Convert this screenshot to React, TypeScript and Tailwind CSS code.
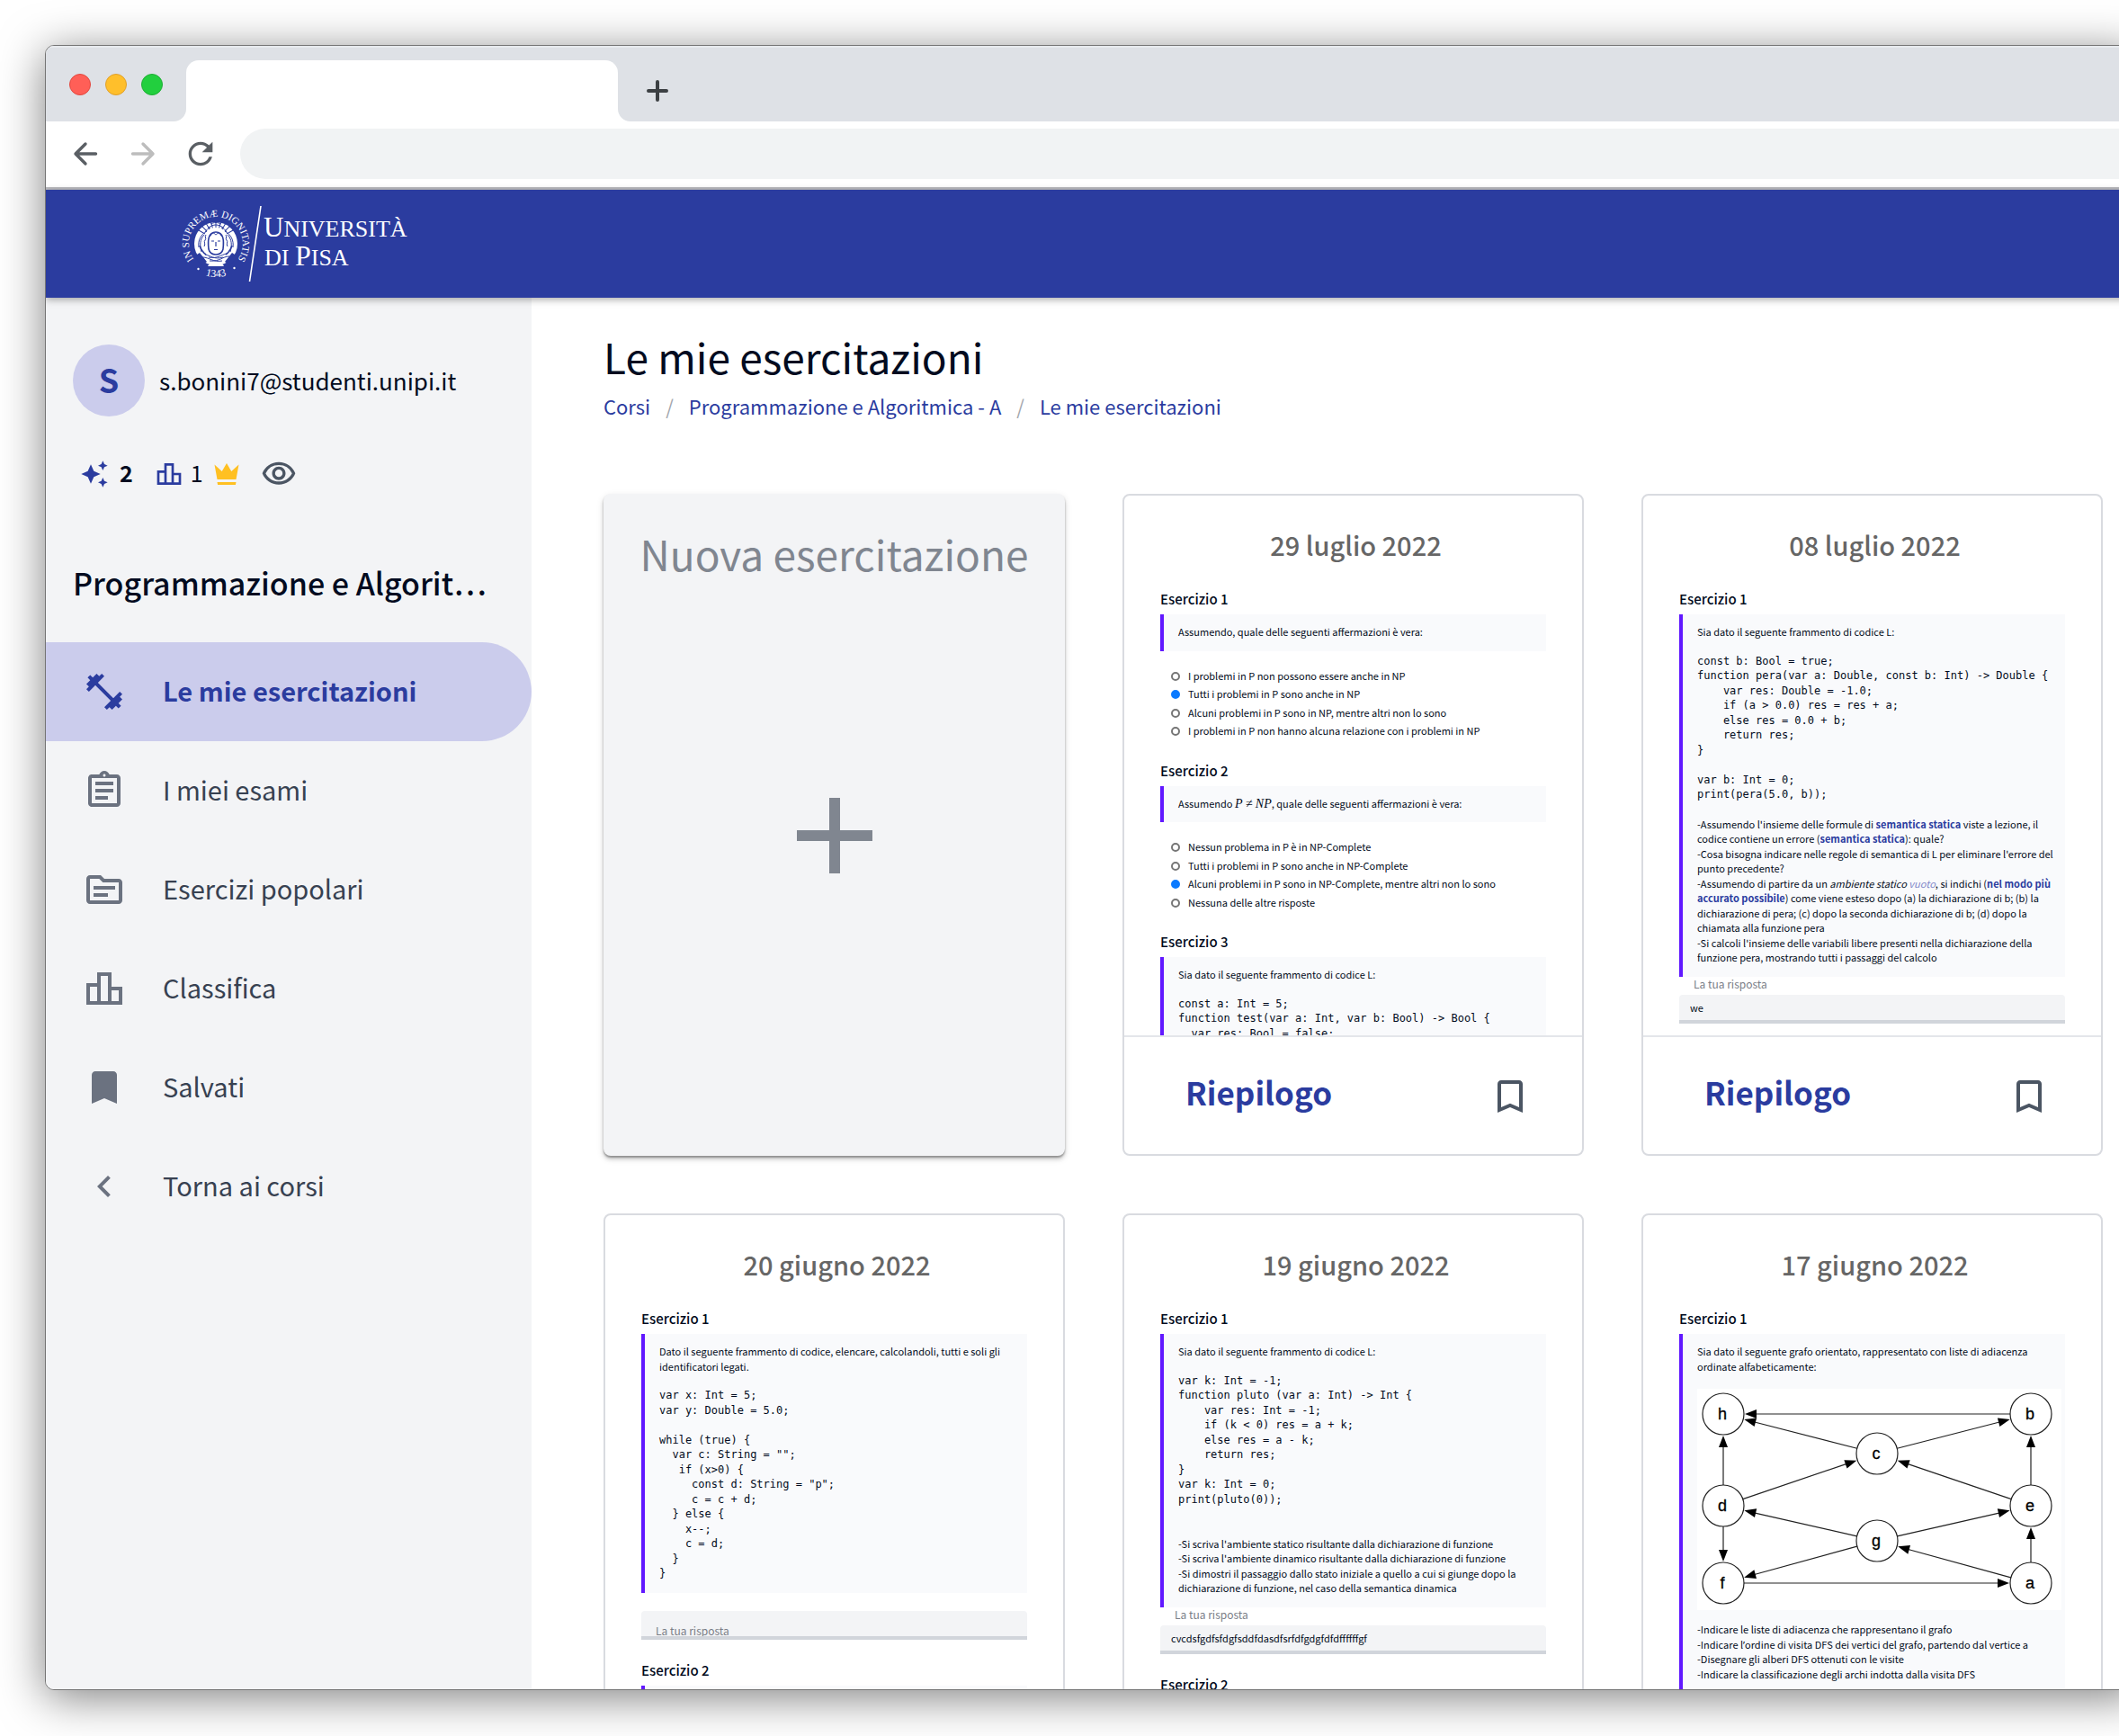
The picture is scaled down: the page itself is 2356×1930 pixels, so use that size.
import React, { useId } from "react";
import {
  MdAdd,
  MdAutoAwesome,
  MdBookmark,
  MdBookmarkBorder,
  MdChevronLeft,
  MdFitnessCenter,
  MdOutlineAssignment,
  MdOutlineLeaderboard,
  MdOutlineSource,
  MdOutlineVisibility,
  MdRefresh,
} from "react-icons/md";

/* ---------- Browser chrome ---------- */

function BrowserTabs() {
  return (
    <div className="flex h-[84px] shrink-0 items-end bg-[#dee1e6] shadow-[inset_0_2px_0_#e8eaee]">
      <div className="flex gap-4 self-center px-[26px] pt-0.5">
        <span className="size-6 rounded-full border border-[#e2483f] bg-[#ff5f57]" />
        <span className="size-6 rounded-full border border-[#e0a02a] bg-[#ffbf2b]" />
        <span className="size-6 rounded-full border border-[#1fae35] bg-[#22cf3e]" />
      </div>
      <svg className="-ml-3.5 size-3.5 text-white" viewBox="0 0 14 14" aria-hidden="true">
        <path d="M14 0v14H0A14 14 0 0 0 14 0z" fill="currentColor" />
      </svg>
      <div className="h-[68px] w-[480px] rounded-t-[14px] bg-white" />
      <svg className="size-3.5 text-white" viewBox="0 0 14 14" aria-hidden="true">
        <path d="M0 0v14h14A14 14 0 0 1 0 0z" fill="currentColor" />
      </svg>
      <button type="button" aria-label="Nuova scheda" className="mb-5 ml-4 text-[#3c4043]">
        <svg className="size-7" viewBox="0 0 28 28" fill="none" stroke="currentColor" strokeWidth="4" strokeLinecap="round" aria-hidden="true">
          <path d="M14 4v20M4 14h20" />
        </svg>
      </button>
    </div>
  );
}

function BrowserToolbar() {
  return (
    <div className="flex h-[76px] shrink-0 items-center border-b-[3px] border-[#bcbcc0] bg-white pb-0.5 pl-[30px]">
      <button type="button" aria-label="Indietro" className="text-[#5a5f64]">
        <svg className="size-7" viewBox="0 0 28 28" fill="none" stroke="currentColor" strokeWidth="3.4" strokeLinecap="round" strokeLinejoin="round" aria-hidden="true">
          <path d="M25.500 14H3.500M14 3L3 14l11 11" />
        </svg>
      </button>
      <button type="button" aria-label="Avanti" className="ml-9 text-[#bdbdbd]">
        <svg className="size-7" viewBox="0 0 28 28" fill="none" stroke="currentColor" strokeWidth="3.4" strokeLinecap="round" strokeLinejoin="round" aria-hidden="true">
          <path d="M2.500 14H24.500M14 3l11 11-11 11" />
        </svg>
      </button>
      <button type="button" aria-label="Ricarica" className="ml-[30px] text-[#5a5f64]">
        <MdRefresh className="size-10" />
      </button>
      <input aria-label="Indirizzo" className="ml-6 h-14 flex-1 rounded-l-full bg-[#f1f3f4] px-8 text-2xl outline-none" />
    </div>
  );
}

/* ---------- University header ---------- */

function Seal() {
  const ring = useId();
  const year = useId();
  const feathers = [-150, -135, -120, -105, -90, -75, -60, -45, -30];
  return (
    <svg className="h-[88px] w-[264px]" viewBox="0 0 264 88" role="img" aria-label="Università di Pisa" fill="#fff">
      <defs>
        <path id={ring} d="M25 68.700A30 30 0 1 1 59 68.700" />
        <path id={year} d="M19 73A37 37 0 0 0 65 73" />
      </defs>
      <g fontFamily="'Liberation Serif', serif">
        <text fontSize="11">
          <textPath href={`#${ring}`} startOffset="50%" textAnchor="middle">IN SUPREMÆ  DIGNITATIS</textPath>
        </text>
        <text fontSize="12">
          <textPath href={`#${year}`} startOffset="50%" textAnchor="middle">1343</textPath>
        </text>
      </g>
      <circle cx="22.500" cy="72" r="1.200" />
      <circle cx="62.500" cy="71" r="1.200" />
      <circle cx="42" cy="44" r="24" />
      <g stroke="#2b3c9f" fill="none" strokeWidth="1">
        {feathers.map((a) => (
          <path key={a} d="M14 0h8" transform={`translate(42 40) rotate(${a})`} />
        ))}
        <path d="M32 30c-7 4-10 10-9 18M52 30c7 4 10 10 9 18M29 34c-5 5-5 12-3 19M55 34c5 5 5 12 3 19" />
        <path d="M34 26c5-4 11-4 16 0M36 22c4-2 8-2 12 0M30 31c2-3 4-5 6-5M54 31c-2-3-4-5-6-5" />
        <path d="M34 50c-1-9-1-19 8-19s9 10 8 19c-1 4-4 6-8 6s-7-2-8-6z" strokeWidth="1.600" />
        <path d="M31 34c-2 2 1 4-1 6s1 4-1 7M53 34c2 2-1 4 1 6s-1 4 1 7M35 36c2-1 2-4 4-4s2 2 3 2 1-2 3-2 2 3 4 4" />
        <path d="M37 41h3M44 41h3M42 42v5M40 50.500h4" strokeWidth="1.200" />
        <path d="M30 56c6 1 10 6 20 3M27 59c8 0 12 6 22 4M54 55c-6 1-10 6-20 4M57 58c-8 0-10 6-22 5" />
        <path d="M24 46c2 6 4 8 7 10M60 46c-2 6-4 8-7 10" strokeWidth="1.600" />
      </g>
      <path d="M18 58l6-4 8 10-6 4zM66 58l-6-4-8 10 6 4z" fill="#2b3c9f" />
      <path d="M33 69c1-3 4-4 8-3h3c4-1 6 0 7 3z" />
      <path d="M92 2L79.500 86" stroke="#fff" strokeWidth="1.600" />
      <g fontFamily="'Liberation Serif', serif">
        <text x="95" y="36" fontSize="31">U<tspan fontSize="26">NIVERSITÀ</tspan></text>
        <text x="96" y="68" fontSize="26">DI <tspan fontSize="32">P</tspan>ISA</text>
      </g>
    </svg>
  );
}

function SiteHeader() {
  return (
    <header className="relative z-10 flex h-[120px] shrink-0 items-center bg-[#2b3c9f] pl-[147px] shadow-[0_2px_8px_rgba(0,0,0,0.35)]">
      <a href="#home">
        <Seal />
      </a>
    </header>
  );
}

/* ---------- Sidebar ---------- */

const NAV = [
  { label: "Le mie esercitazioni", icon: MdFitnessCenter, active: true },
  { label: "I miei esami", icon: MdOutlineAssignment },
  { label: "Esercizi popolari", icon: MdOutlineSource },
  { label: "Classifica", icon: MdOutlineLeaderboard },
  { label: "Salvati", icon: MdBookmark },
  { label: "Torna ai corsi", icon: MdChevronLeft },
];

function Sidebar() {
  return (
    <aside className="w-[540px] shrink-0 bg-[#f3f4f6] pt-[52px]">
      <div className="flex items-center gap-4 pl-[30px]">
        <span className="flex size-20 items-center justify-center rounded-full bg-[#cbccec] pb-1 text-[36px] font-bold leading-10 text-[#2b3c9f]">S</span>
        <span className="text-[26px] leading-10 text-[#020b20]">s.bonini7@studenti.unipi.it</span>
      </div>

      <div className="mt-12 flex h-8 items-center pl-[38px] text-[25px] leading-8 text-[#020b20]">
        <MdAutoAwesome className="size-8 text-[#2b3c9f]" />
        <span className="ml-3 pb-1 font-bold">2</span>
        <MdOutlineLeaderboard className="ml-6 size-8 text-[#2b3c9f]" />
        <span className="ml-2 pb-1">1</span>
        <svg className="ml-2 size-9 text-[#ffc022]" viewBox="0 0 24 24" fill="currentColor" aria-hidden="true">
          <path d="M5 16L3 5l5.500 5L12 4l3.500 6L21 5l-2 11H5zm14 2l-.4 2H5.400L5 18h14z" />
        </svg>
        <button type="button" aria-label="Mostra" className="ml-5 text-[#4b5563]">
          <MdOutlineVisibility className="size-10" />
        </button>
      </div>

      <h2 className="mt-[85px] whitespace-nowrap pl-[30px] text-[34px] font-medium leading-10 text-[#020b20]">Programmazione e Algorit…</h2>

      <nav className="mt-[46px]">
        {NAV.map(({ label, icon: Icon, active }) => (
          <a
            key={label}
            href="#nav"
            className={
              active
                ? "flex h-[110px] items-center gap-[41px] rounded-r-full bg-[#cbccec] pl-[41px] text-[#2b3c9f]"
                : "flex h-[110px] items-center gap-[41px] pl-[41px] text-[#6b7280]"
            }
          >
            <Icon className="size-12" />
            <span className={active ? "pb-1 text-[29px] font-bold leading-10" : "pb-1 text-[29px] leading-10 text-[#374151]"}>{label}</span>
          </a>
        ))}
      </nav>
    </aside>
  );
}

/* ---------- Exercise blocks ---------- */

function Exercise({ n, children }: { n: number; children?: React.ReactNode }) {
  return (
    <section className="pb-[22px]">
      <h4 className="mb-[5px] text-[15px] font-medium leading-6">Esercizio {n}</h4>
      {children}
    </section>
  );
}

function Statement({ children }: { children?: React.ReactNode }) {
  return <div className="min-h-10 whitespace-pre border-l-4 border-[#6118ff] bg-[#f9fafc] pb-[13px] pl-4 pt-[11px] text-[11px] leading-normal">{children}</div>;
}

function Code({ children }: { children: string }) {
  return <pre className="my-4 font-['DejaVu_Sans_Mono',monospace] text-[12px] leading-snug last:mb-0">{children}</pre>;
}

function Choices({ options, selected }: { options: string[]; selected: number }) {
  const name = useId();
  return (
    <div className="flex flex-col gap-1 pb-0.5 pl-3 pt-[19px] text-[11px] leading-normal">
      {options.map((o, i) => (
        <label key={o} className="flex items-center gap-[9px]">
          <input
            type="radio"
            name={name}
            defaultChecked={i === selected}
            className="mt-0.5 size-2.5 appearance-none rounded-full border-2 border-[#767676] bg-white checked:border-[#0a7aff] checked:bg-[#0a7aff]"
          />
          {o}
        </label>
      ))}
    </div>
  );
}

function Answer({ value }: { value?: string }) {
  const id = useId();
  if (!value) {
    return (
      <div className="relative pt-5">
        <input id={id} className="block h-8 w-full rounded-t border-b-4 border-[#d1d5db] bg-[#f3f4f6] px-3 text-[12px] outline-none" />
        <label htmlFor={id} className="absolute left-4 top-[34px] h-3.5 overflow-hidden text-[12px] leading-4 text-[#7a7e87]">
          La tua risposta
        </label>
      </div>
    );
  }
  return (
    <div>
      <label htmlFor={id} className="block pb-1 pl-4 text-[12px] leading-4 text-[#7a7e87]">
        La tua risposta
      </label>
      <input
        id={id}
        defaultValue={value}
        className="block h-8 w-full rounded-t border-b-4 border-[#d1d5db] bg-[#f3f4f6] px-3 text-[11px] outline-none"
      />
    </div>
  );
}

/* ---------- Graph drawing ---------- */

const NODES: Record<string, [number, number]> = {
  h: [29, 28],
  b: [371, 28],
  c: [200, 72],
  d: [29, 130],
  e: [371, 130],
  g: [200, 169],
  f: [29, 216],
  a: [371, 216],
};

const EDGES = ["bh", "ch", "cb", "dh", "dc", "df", "eb", "ec", "gd", "ge", "gf", "ag", "ae", "fa"];

function Graph() {
  const r = 23;
  return (
    <svg className="mb-[13px] mt-[17px] w-full bg-white" viewBox="0 0 405 246" role="img" aria-label="Grafo orientato">
      {EDGES.map((edge) => {
        const [x1, y1] = NODES[edge[0]];
        const [x2, y2] = NODES[edge[1]];
        const len = Math.hypot(x2 - x1, y2 - y1);
        const deg = (Math.atan2(y2 - y1, x2 - x1) * 180) / Math.PI;
        const tip = len - r - 1;
        return (
          <g key={edge} transform={`translate(${x1} ${y1}) rotate(${deg})`}>
            <path d={`M${r} 0H${tip - 10}`} stroke="#222" strokeWidth="1.200" />
            <path d={`M${tip} 0l-13 -5v10z`} />
          </g>
        );
      })}
      {Object.entries(NODES).map(([name, [x, y]]) => (
        <g key={name}>
          <circle cx={x} cy={y} r={r} fill="#fff" stroke="#222" strokeWidth="1.200" />
          <text x={x - 1} y={y + 6} textAnchor="middle" fontSize="18" fontFamily="'Liberation Sans', sans-serif" stroke="#000" strokeWidth="0.300">
            {name}
          </text>
        </g>
      ))}
    </svg>
  );
}

/* ---------- Cards ---------- */

function Card({ date, children }: { date: string; children?: React.ReactNode }) {
  return (
    <article className="flex h-[736px] flex-col overflow-hidden rounded-lg border-2 border-[#d9dbe0] bg-white">
      <div className="flex-1 overflow-hidden px-10 pt-[34px]">
        <h3 className="mb-[29px] pl-1.5 text-center text-[29px] font-medium leading-10 text-[#666]">{date}</h3>
        {children}
      </div>
      <footer className="flex h-[132px] shrink-0 items-center justify-between border-t-2 border-[#e4e6ea] pl-[68px] pr-14">
        <button type="button" className="pb-2 text-[35px] font-bold leading-10 text-[#2b3c9f]">
          Riepilogo
        </button>
        <button type="button" aria-label="Salva" className="pt-0.5 text-[#4b5563]">
          <MdBookmarkBorder className="size-12" />
        </button>
      </footer>
    </article>
  );
}

function B({ children }: { children: React.ReactNode }) {
  return <b className="font-bold text-[#2b3c9f]">{children}</b>;
}

function NewCard() {
  return (
    <button
      type="button"
      className="flex h-[736px] flex-col items-center rounded-lg bg-[#f3f4f6] pt-9 text-[#808690] shadow-[0_2px_2px_rgba(0,0,0,0.3),0_4px_4px_rgba(0,0,0,0.12),0_3px_8px_rgba(0,0,0,0.12)]"
    >
      <span className="whitespace-nowrap text-[46px] leading-[60px]">Nuova esercitazione</span>
      <span className="flex flex-1 items-center pb-[73px]">
        <MdAdd className="size-36" />
      </span>
    </button>
  );
}

function Cards() {
  return (
    <div className="mt-[82px] grid grid-cols-3 gap-16">
      <NewCard />

      <Card date="29 luglio 2022">
        <Exercise n={1}>
          <Statement>Assumendo, quale delle seguenti affermazioni è vera:</Statement>
          <Choices
            selected={1}
            options={[
              "I problemi in P non possono essere anche in NP",
              "Tutti i problemi in P sono anche in NP",
              "Alcuni problemi in P sono in NP, mentre altri non lo sono",
              "I problemi in P non hanno alcuna relazione con i problemi in NP",
            ]}
          />
        </Exercise>
        <Exercise n={2}>
          <Statement>
            Assumendo <span className="font-['Liberation_Serif',serif] text-[14px] italic leading-none">P ≠ NP</span>, quale delle seguenti affermazioni è vera:
          </Statement>
          <Choices
            selected={2}
            options={[
              "Nessun problema in P è in NP-Complete",
              "Tutti i problemi in P sono anche in NP-Complete",
              "Alcuni problemi in P sono in NP-Complete, mentre altri non lo sono",
              "Nessuna delle altre risposte",
            ]}
          />
        </Exercise>
        <Exercise n={3}>
          <Statement>
            Sia dato il seguente frammento di codice L:
            <Code>{`const a: Int = 5;
function test(var a: Int, var b: Bool) -> Bool {
  var res: Bool = false;`}</Code>
          </Statement>
        </Exercise>
      </Card>

      <Card date="08 luglio 2022">
        <Exercise n={1}>
          <Statement>
            Sia dato il seguente frammento di codice L:
            <Code>{`const b: Bool = true;
function pera(var a: Double, const b: Int) -> Double {
    var res: Double = -1.0;
    if (a > 0.0) res = res + a;
    else res = 0.0 + b;
    return res;
}

var b: Int = 0;
print(pera(5.0, b));`}</Code>
            -Assumendo l'insieme delle formule di <B>semantica statica</B> viste a lezione, il<br />
            codice contiene un errore (<B>semantica statica</B>): quale?<br />
            -Cosa bisogna indicare nelle regole di semantica di L per eliminare l'errore del<br />
            punto precedente?<br />
            -Assumendo di partire da un <i>ambiente statico <span className="text-[#7f88c9]">vuoto</span></i>, si indichi (<B>nel modo più</B><br />
            <B>accurato possibile</B>) come viene esteso dopo (a) la dichiarazione di b; (b) la<br />
            dichiarazione di pera; (c) dopo la seconda dichiarazione di b; (d) dopo la<br />
            chiamata alla funzione pera<br />
            -Si calcoli l'insieme delle variabili libere presenti nella dichiarazione della<br />
            funzione pera, mostrando tutti i passaggi del calcolo
          </Statement>
          <Answer value="we" />
        </Exercise>
      </Card>

      <Card date="20 giugno 2022">
        <Exercise n={1}>
          <Statement>
            Dato il seguente frammento di codice, elencare, calcolandoli, tutti e soli gli<br />
            identificatori legati.
            <Code>{`var x: Int = 5;
var y: Double = 5.0;

while (true) {
  var c: String = "";
   if (x>0) {
     const d: String = "p";
     c = c + d;
  } else {
    x--;
    c = d;
  }
}`}</Code>
          </Statement>
          <Answer />
        </Exercise>
        <Exercise n={2}>
          <Statement />
        </Exercise>
      </Card>

      <Card date="19 giugno 2022">
        <Exercise n={1}>
          <Statement>
            Sia dato il seguente frammento di codice L:
            <Code>{`var k: Int = -1;
function pluto (var a: Int) -> Int {
    var res: Int = -1;
    if (k < 0) res = a + k;
    else res = a - k;
    return res;
}
var k: Int = 0;
print(pluto(0));
`}</Code>
            <br />
            -Si scriva l'ambiente statico risultante dalla dichiarazione di funzione<br />
            -Si scriva l'ambiente dinamico risultante dalla dichiarazione di funzione<br />
            -Si dimostri il passaggio dallo stato iniziale a quello a cui si giunge dopo la<br />
            dichiarazione di funzione, nel caso della semantica dinamica
          </Statement>
          <Answer value="cvcdsfgdfsfdgfsddfdasdfsrfdfgdgfdfdffffffgf" />
        </Exercise>
        <Exercise n={2}>
          <Statement />
        </Exercise>
      </Card>

      <Card date="17 giugno 2022">
        <Exercise n={1}>
          <Statement>
            Sia dato il seguente grafo orientato, rappresentato con liste di adiacenza<br />
            ordinate alfabeticamente:
            <div className="pr-1">
              <Graph />
            </div>
            -Indicare le liste di adiacenza che rappresentano il grafo<br />
            -Indicare l<span className="font-['Noto_Sans',sans-serif] leading-none">’</span>ordine di visita DFS dei vertici del grafo, partendo dal vertice a<br />
            -Disegnare gli alberi DFS ottenuti con le visite<br />
            -Indicare la classificazione degli archi indotta dalla visita DFS
          </Statement>
        </Exercise>
      </Card>
    </div>
  );
}

/* ---------- Page ---------- */

function Breadcrumbs() {
  return (
    <nav aria-label="Percorso" className="mt-[11px] flex gap-[17px] text-[22px] leading-8 text-[#2b3c9f]">
      <a href="#corsi">Corsi</a>
      <span className="text-[#a3a6ad]">/</span>
      <a href="#corso">Programmazione e Algoritmica - A</a>
      <span className="text-[#a3a6ad]">/</span>
      <a href="#esercitazioni">Le mie esercitazioni</a>
    </nav>
  );
}

export default function App() {
  return (
    <div className="flex h-screen overflow-hidden bg-white pb-[51px] pl-[50px] pt-[50px] font-['Noto_Sans_CJK_SC',sans-serif] text-[#020b20]">
      <div className="-mr-6 flex min-w-0 flex-1 flex-col overflow-hidden rounded-[10px] border border-[#757575] bg-white shadow-[0_8px_50px_rgba(0,0,0,0.5)]">
        <BrowserTabs />
        <BrowserToolbar />
        <SiteHeader />
        <div className="flex min-h-0 flex-1">
          <Sidebar />
          <main className="min-w-0 flex-1 pl-20 pr-[41px] pt-[37px]">
            <h1 className="text-[46px] leading-[56px]">Le mie esercitazioni</h1>
            <Breadcrumbs />
            <Cards />
          </main>
        </div>
      </div>
    </div>
  );
}
